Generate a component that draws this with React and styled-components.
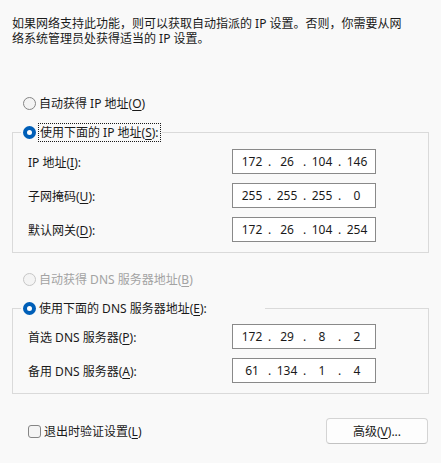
import React from 'react'
import styled, { createGlobalStyle } from 'styled-components'

const GlobalStyle = createGlobalStyle`
  body {
    margin: 0;
    background: #f9f9f9;
    font-family: "Noto Sans", "Noto Sans CJK SC", sans-serif;
    font-size: 12px;
    color: #1a1a1a;
  }
`

const Page = styled.div`
  width: 441px;
  height: 463px;
  box-sizing: border-box;
  padding: 16px 12px 0;
`

const Intro = styled.p`
  margin: 0;
  line-height: 15px;
`

const Key = styled.span`
  text-decoration: underline;
  text-underline-offset: 2px;
`

const RadioRow = styled.label`
  display: flex;
  align-items: center;
  gap: 3px;
  height: 18px;
  margin-top: ${p => p.$top || 0}px;
  padding-left: 11px;
  color: ${p => (p.$disabled ? '#a3a3a3' : '#1a1a1a')};
  white-space: nowrap;
`

const RadioDot = styled.span`
  box-sizing: border-box;
  width: 13px;
  height: 13px;
  border-radius: 50%;
  flex: none;
  border: ${p => (p.$checked ? '4px solid #005fb8' : `1px solid ${p.$disabled ? '#c6c6c6' : '#858585'}`)};
  background: ${p => (p.$checked ? '#ffffff' : '#f4f4f4')};
`

// dotted focus rectangle round the selected radio's caption
const Focus = styled.span`
  outline: 1px dotted #1a1a1a;
  outline-offset: 0;
  padding: 0 1px;
  line-height: 17px;
`

const Group = styled.fieldset`
  margin: ${p => p.$top}px 0 0;
  padding: 0 15px 10px;
  border: 1px solid #dadada;
  min-width: 0;
`

const Legend = styled.legend`
  margin-left: -7px;
  padding: 0 ${p => p.$tail || 2}px 0 2px;

  & > ${RadioRow} {
    padding-left: 0;
  }
`

const Fields = styled.div`
  display: grid;
  grid-template-columns: 204px 144px;
  row-gap: 9px;
  margin-top: ${p => p.$top}px;
  align-items: center;
`

const FieldLabel = styled.span`
  white-space: nowrap;
`

const IpBox = styled.div`
  box-sizing: border-box;
  height: 25px;
  display: flex;
  align-items: center;
  padding-left: 5px;
  background: #ffffff;
  border: 1px solid #898989;
`

const Octet = styled.span`
  width: 28px;
  text-align: center;
`

const Dot = styled.span`
  width: 7px;
  text-align: center;
`

const Footer = styled.div`
  display: flex;
  align-items: center;
  justify-content: space-between;
  margin: 24px 1px 0 0;
  padding-left: 16px;
`

const CheckRow = styled.label`
  display: flex;
  align-items: center;
  gap: 3px;
`

const CheckBox = styled.span`
  box-sizing: border-box;
  width: 13px;
  height: 13px;
  border: 1px solid #858585;
  border-radius: 3px;
  background: #f4f4f4;
`

const Button = styled.button`
  box-sizing: border-box;
  width: 102px;
  height: 26px;
  font: inherit;
  color: #1a1a1a;
  background: #fdfdfd;
  border: 1px solid #d4d4d4;
  border-bottom-color: #c2c2c2;
  border-radius: 4px;
  padding: 0;
`

function Ip({ value }) {
  const parts = value.split('.')
  return (
    <IpBox>
      {parts.map((p, i) => (
        <React.Fragment key={i}>
          {i > 0 && <Dot>.</Dot>}
          <Octet>{p}</Octet>
        </React.Fragment>
      ))}
    </IpBox>
  )
}

const ipRows = [
  ['IP 地址(', 'I', '):', '172.26.104.146'],
  ['子网掩码(', 'U', '):', '255.255.255.0'],
  ['默认网关(', 'D', '):', '172.26.104.254'],
]

const dnsRows = [
  ['首选 DNS 服务器(', 'P', '):', '172.29.8.2'],
  ['备用 DNS 服务器(', 'A', '):', '61.134.1.4'],
]

function FieldGrid({ rows, top }) {
  return (
    <Fields $top={top}>
      {rows.map(([pre, key, post, ip]) => (
        <React.Fragment key={pre}>
          <FieldLabel>
            {pre}
            <Key>{key}</Key>
            {post}
          </FieldLabel>
          <Ip value={ip} />
        </React.Fragment>
      ))}
    </Fields>
  )
}

export default function App() {
  return (
    <>
      <GlobalStyle />
      <Page>
        <Intro>
          如果网络支持此功能，则可以获取自动指派的 IP 设置。否则，你需要从网
          <br />
          络系统管理员处获得适当的 IP 设置。
        </Intro>

        <RadioRow $top={48}>
          <RadioDot />
          <span>
            自动获得 IP 地址(<Key>O</Key>)
          </span>
        </RadioRow>

        <Group $top={11}>
          <Legend>
            <RadioRow>
              <RadioDot $checked />
              <Focus>
                使用下面的 IP 地址(<Key>S</Key>):
              </Focus>
            </RadioRow>
          </Legend>
          <FieldGrid rows={ipRows} top={8} />
        </Group>

        <RadioRow $top={17} $disabled>
          <RadioDot $disabled />
          <span>
            自动获得 DNS 服务器地址(<Key>B</Key>)
          </span>
        </RadioRow>

        <Group $top={11}>
          <Legend $tail={58}>
            <RadioRow>
              <RadioDot $checked />
              <span>
                使用下面的 DNS 服务器地址(<Key>E</Key>):
              </span>
            </RadioRow>
          </Legend>
          <FieldGrid rows={dnsRows} top={7} />
        </Group>

        <Footer>
          <CheckRow>
            <CheckBox />
            <span>
              退出时验证设置(<Key>L</Key>)
            </span>
          </CheckRow>
          <Button>
            高级(<Key>V</Key>)...
          </Button>
        </Footer>
      </Page>
    </>
  )
}
